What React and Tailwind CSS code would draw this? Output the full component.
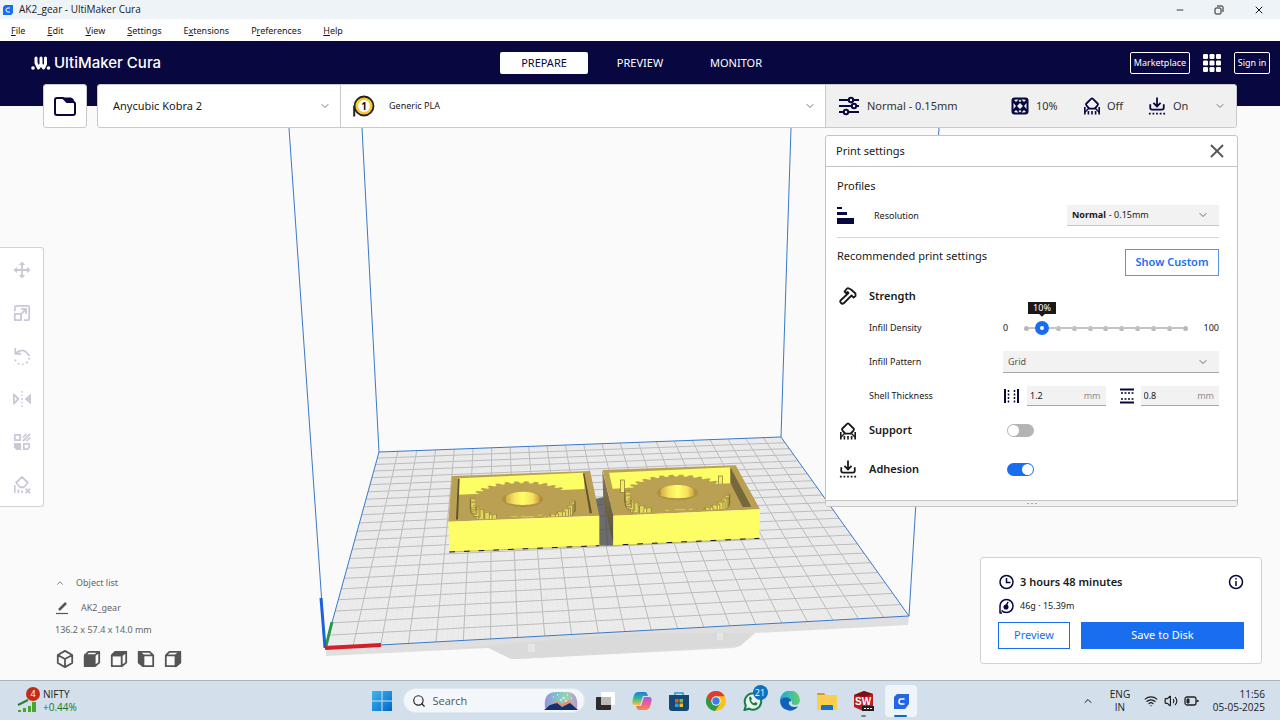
import React, { useState } from 'react';
import { ChevronDown, ChevronUp, X, Minus, Search, Wifi, Volume2 } from 'lucide-react';

const menus = [
    ['', 'F', 'ile'],
    ['', 'E', 'dit'],
    ['', 'V', 'iew'],
    ['', 'S', 'ettings'],
    ['E', 'x', 'tensions'],
    ['P', 'r', 'eferences'],
    ['', 'H', 'elp'],
];

// Build plate corners on screen: front-left, front-right, back-right, back-left
const plate = [[325, 648], [909, 616], [781, 437], [379, 452]];

// Projects (u, v) in 0..1 on the plate to screen coordinates
function project(u, v) {
    const [[x0, y0], [x1, y1], [x2, y2], [x3, y3]] = plate;
    const dx1 = x1 - x2, dx2 = x3 - x2, sx = x0 - x1 + x2 - x3;
    const dy1 = y1 - y2, dy2 = y3 - y2, sy = y0 - y1 + y2 - y3;
    const det = dx1 * dy2 - dx2 * dy1;
    const g = (sx * dy2 - dx2 * sy) / det;
    const h = (dx1 * sy - sx * dy1) / det;
    const w = g * u + h * v + 1;
    return [
        ((x1 - x0 + g * x1) * u + (x3 - x0 + h * x3) * v + x0) / w,
        ((y1 - y0 + g * y1) * u + (y3 - y0 + h * y3) * v + y0) / w,
    ];
}

function gridPath(cells) {
    let d = '';
    for (let i = 1; i < cells; i++) {
        const t = i / cells;
        d += `M${project(t, 0)}L${project(t, 1)}M${project(0, t)}L${project(1, t)}`;
    }
    return d;
}

function Gear({ cx, cy }) {
    const teeth = 32;
    const at = (a, r) => [cx + Math.cos(a) * 157 * r, cy + Math.sin(a) * 56 * r];
    const outline = [];
    const walls = [];
    for (let i = 0; i < teeth; i++) {
        const a = (i / teeth) * Math.PI * 2;
        const s = (Math.PI * 2) / teeth;
        const p = [at(a, 0.9), at(a + s * 0.2, 1), at(a + s * 0.55, 1), at(a + s * 0.75, 0.9)];
        outline.push(...p);
        // only the teeth at both sides show their walls
        if (Math.sin(a) > -0.15 && Math.abs(Math.cos(a)) > 0.55) walls.push([p[0], p[1]], [p[2], p[3]], [p[1], p[2]]);
    }
    return (
        <g>
            {walls.map(([p, q], i) => (
                <polygon
                    key={i}
                    points={`${p} ${q} ${q[0]},${q[1] + 30} ${p[0]},${p[1] + 30}`}
                    fill={i % 3 === 2 ? '#fdfd66' : '#e6d65a'}
                    stroke="#6d6030"
                    strokeWidth="1.500"
                />
            ))}
            <polygon points={outline.join(' ')} fill="#b9a052" />
            <ellipse cx={cx} cy={cy - 2} rx="62" ry="23" fill="#b08f46" />
            <path
                d={`M${cx - 50} ${cy - 12}C${cx - 30} ${cy - 29} ${cx + 30} ${cy - 29} ${cx + 50} ${cy - 12}V${cy + 8}Q${cx} ${cy + 22} ${cx - 50} ${cy + 8}Z`}
                fill="url(#holeShade)"
            />
        </g>
    );
}

function Viewport() {
    return (
        <svg className="absolute inset-0 w-full h-full" viewBox="0 84 1280 596" preserveAspectRatio="xMidYMid slice" aria-hidden="true">
            <defs>
                <linearGradient id="holeShade">
                    <stop offset="0" stopColor="#d4ad49" />
                    <stop offset="0.25" stopColor="#f6e45e" />
                    <stop offset="0.5" stopColor="#ffff68" />
                    <stop offset="0.8" stopColor="#f6e05c" />
                    <stop offset="1" stopColor="#cc9f42" />
                </linearGradient>
                <linearGradient id="wallShade" x2="0" y2="1">
                    <stop offset="0" stopColor="#8a7a4a" />
                    <stop offset="1" stopColor="#55503c" />
                </linearGradient>
                <clipPath id="trayLeft"><polygon points="86,60 462,48 486,194 76,211" /></clipPath>
                <clipPath id="trayRight"><polygon points="537,60 901,40 962,173 572,191" /></clipPath>
            </defs>

            {/* bed underside */}
            <polygon points="326,648 909,616 908,625 755,633 740,646 734,648 518,659 511,659 489,648 326,656" fill="#dfdfdf" />
            <polygon points="455,648 489,648 511,659 518,659 740,646 755,633 640,633" fill="#dadada" />
            <rect x="528" y="644" width="7" height="8" rx="1" fill="#e6e6e6" />
            <rect x="717" y="633" width="6" height="7" rx="1" fill="#e6e6e6" />

            <polygon points={plate.join(' ')} fill="#ededed" />
            <path d={gridPath(110)} stroke="#e6e6e6" strokeWidth="0.5" />
            <path d={gridPath(22)} stroke="#bcbcbc" strokeWidth="1" />

            <g stroke="#3a78c8" strokeWidth="1" fill="none">
                <polygon points={plate.join(' ')} />
                <path d="M325 648L289 128M379 452L362 128M781 437L791 128M909 616L939 128" />
            </g>
            <path d="M326 646L332 622" stroke="#229a48" strokeWidth="3" />
            <path d="M325 648L321 598" stroke="#1d62dc" strokeWidth="3" />
            <path d="M325 648L381 645" stroke="#d2202a" strokeWidth="4" />

            {/* trays with the gears inside */}
            <g transform="translate(430 450) scale(0.33333)">
                <polygon points="495,147 525,140 550,287 508,287" fill="#6c6c6c" />
                <path d="M497 165L548 160M500 200L548 195M503 240L548 235M525 140L532 287" stroke="#595959" strokeWidth="2" />

                <polygon points="66,78 480,63 508,197 55,215" fill="#b9a052" />
                <polygon points="86,85 460,68 464,117 86,134" fill="#fdfd66" />
                <polygon points="84,86 89,86 84,208 78,209" fill="#5d5330" />
                <polygon points="459,70 463,70 486,190 479,190" fill="#5d5330" />
                <g clipPath="url(#trayLeft)"><Gear cx={278} cy={150} /></g>
                <path d="M244 200h20M272 200h40M322 196h16" stroke="#e8dc5c" strokeWidth="2" />
                <polygon points="55,215 508,197 508,287 58,306" fill="#fdfd66" />

                <polygon points="518,60 917,46 990,178 550,197" fill="#b9a052" />
                <polygon points="517,60 550,197 550,287 520,150" fill="url(#wallShade)" />
                <polygon points="537,68 901,52 903,100 548,116" fill="#fdfd66" />
                <polygon points="901,52 964,170 938,171 901,98" fill="#75683c" />
                <g fill="#f4ef62" stroke="#7c6e38" strokeWidth="2">
                    <rect x="571" y="90" width="12" height="38" />
                    <rect x="866" y="78" width="11" height="26" />
                </g>
                <g clipPath="url(#trayRight)"><Gear cx={742} cy={130} /></g>
                <path d="M706 181h12M734 179h32M776 178h12" stroke="#e8dc5c" strokeWidth="2" />
                <polygon points="550,197 990,178 988,265 550,287" fill="#fdfd66" />

                <path d="M58 306L508 287M550 287L988 265" stroke="#a8a13c" strokeWidth="2" />
                <path d="M58 306L508 287M578 284L988 265" stroke="#111133" strokeWidth="3" strokeDasharray="17 27" />
            </g>
        </svg>
    );
}

function SupportIcon({ className }) {
    return (
        <svg viewBox="0 0 20 20" className={className} fill="none" stroke="currentColor" strokeWidth="2" strokeLinejoin="round" aria-hidden="true">
            <path d="M9 2Q10 1 11 2L16.500 7.500Q17 8.500 16 9.500L13 13H7L4 9.500Q3 8.500 3.500 7.500Z" />
            <path d="M7 12L2 17M13 12L18 17" strokeWidth="1.500" />
            <path d="M2 11V19.500M18 11V19.500M6 15.500V19.500M10 15.500V19.500M14 15.500V19.500" strokeWidth="1.800" />
        </svg>
    );
}

function AdhesionIcon({ className }) {
    return (
        <svg viewBox="0 0 20 20" className={className} fill="none" stroke="currentColor" strokeWidth="2" aria-hidden="true">
            <path d="M10 0.500V10M6 6.500l4 4l4-4M2.500 8V12Q2.500 14 4.500 14H15.500Q17.500 14 17.500 12V8" />
            <path d="M1 18.500H19" strokeDasharray="2 2" />
        </svg>
    );
}

function InfillIcon() {
    return (
        <svg viewBox="0 0 18 18" className="w-[18px] h-[18px]" aria-hidden="true">
            <rect x="0.500" y="0.500" width="17" height="17" rx="3" fill="currentColor" />
            <path
                d="M9 6L12 9L9 12L6 9ZM5 2.500H7.500L5 5L3 3ZM13 2.500H10.500L13 5L15 3ZM5 15.500H7.500L5 13L3 15ZM13 15.500H10.500L13 13L15 15ZM2.500 6L5 9L2.500 12ZM15.500 6L13 9L15.500 12ZM9 2.500L10.500 4L9 5L7.500 4ZM9 15.500L10.500 14L9 13L7.500 14Z"
                fill="#f0f0f0"
            />
        </svg>
    );
}

function SlidersIcon() {
    return (
        <svg viewBox="0 0 22 20" className="w-[22px] h-[20px]" fill="none" stroke="currentColor" strokeWidth="2" aria-hidden="true">
            <path d="M1 4H10M16 4H21M1 10H13M19 10H21M1 16H5M11 16H21" />
            <circle cx="13" cy="4" r="2.200" />
            <circle cx="16" cy="10" r="2.200" />
            <circle cx="8" cy="16" r="2.200" />
        </svg>
    );
}

function FolderIcon() {
    return (
        <svg viewBox="0 0 22 19" className="w-[22px] h-[19px]" fill="none" stroke="currentColor" strokeWidth="2" strokeLinejoin="round" aria-hidden="true">
            <path d="M1 3Q1 1 3 1H9L13 5H19Q21 5 21 7V16Q21 18 19 18H3Q1 18 1 16Z" />
            <path d="M9 1H17Q19 1 20 5H13Z" fill="currentColor" strokeWidth="1" />
        </svg>
    );
}

function SpoolIcon() {
    return (
        <svg viewBox="0 0 22 22" className="w-[22px] h-[22px]" aria-hidden="true">
            <path d="M1.200 11V21.500" stroke="#222" strokeWidth="2" />
            <circle cx="11" cy="11" r="9.500" fill="#fbc82f" stroke="#222" strokeWidth="1.800" />
            <circle cx="11" cy="11" r="6" fill="#fff" />
            <text x="11" y="14.500" textAnchor="middle" fontSize="10" fontWeight="700" fontFamily="Noto Sans, sans-serif" fill="#111">1</text>
        </svg>
    );
}

function HammerIcon() {
    return (
        <svg viewBox="0 0 18 18" className="w-[18px] h-[18px]" fill="none" stroke="currentColor" strokeWidth="1.800" strokeLinejoin="round" aria-hidden="true">
            <path d="M5.500 4.500L8 1.500Q9 1 10 1.500L12 2.500L16.500 6.500V9L14.500 10.500L12.500 8.500L5 16Q3.500 17.500 2 16T2 13L9.500 6L8.500 5L7 6Z" />
        </svg>
    );
}

const cubeFaces = [
    null,
    'M2 6H12V18H2Z',
    'M2 6L6 2H18L13 6Z',
    'M2 2L7 6V18L2 14Z',
    'M13 6L18 2V14L13 18Z',
];

function CubeIcon({ face }) {
    let lines = 'M2 6H13V18H2ZM2 6L6 2H18V14L13 18M13 6L18 2';
    if (face === 0) lines = 'M10 1L18 5.500V14.500L10 19L2 14.500V5.500ZM2 5.500L10 10L18 5.500M10 10V19';
    if (face === 3) lines = 'M7 6H18V18H7ZM7 6L2 2V14L7 18M2 2H14L18 6';
    return (
        <svg viewBox="0 0 20 20" className="w-[18px] h-[18px]" fill="none" stroke="currentColor" strokeWidth="2" strokeLinejoin="round" aria-hidden="true">
            <path d={lines} />
            {face > 0 && <path d={cubeFaces[face]} fill="currentColor" />}
        </svg>
    );
}

const tools = [
    ['Move', <g key="i"><path d="M10 3V17M3 10H17" /><path d="M10 0.500L13.500 4.500H6.500ZM10 19.500L13.500 15.500H6.500ZM0.500 10L4.500 6.500V13.500ZM19.500 10L15.500 6.500V13.500Z" fill="currentColor" stroke="none" /></g>],
    ['Scale', <path key="i" d="M2 8V4Q2 2 4 2H16Q18 2 18 4V16Q18 18 16 18H12M2 11H9V18H2ZM8 12L14 6M9 5.500H14.500V11" />],
    ['Rotate', <g key="i"><path d="M3 7Q10 1 15 6Q18 9 18 10M2.500 1V7.500H9" /><path d="M18 12A8 8 0 0 1 2 11" strokeDasharray="2 3" /></g>],
    ['Mirror', <g key="i"><path d="M1 5V15L6 10Z" /><path d="M20 4V16L13 10Z" fill="currentColor" stroke="none" /><path d="M10 1V19" strokeDasharray="2 2" strokeWidth="1.500" /></g>],
    ['Per model settings', <g key="i"><path d="M2 2H8V8H2ZM12 12H18V16L16 18H12Z" /><path d="M1 11H9V19H4L1 16Z" fill="currentColor" stroke="none" /><path d="M11 5L15 1M11 9L19 1M15 9L19 5" strokeWidth="1.800" /></g>],
    ['Support blocker', <g key="i"><path d="M10 1L16.500 7.500L12 12.500H8L3.500 7.500Z" /><path d="M2 10V19M6 15V19M10 16V19M14 14L19 19M19 14L14 19" strokeWidth="1.800" /></g>],
];

function NumberField({ label, value }) {
    return (
        <div className="flex flex-1 min-w-0 h-[20px] items-center bg-[#f2f2f2] border-b border-[#a8a8a8] pl-[3px] pr-[5px]">
            <input aria-label={label} defaultValue={value} className="w-0 flex-1 bg-transparent outline-none" />
            <span className="text-[#8f8f8f]">mm</span>
        </div>
    );
}

function Toggle({ id, defaultChecked }) {
    return (
        <input
            id={id}
            type="checkbox"
            role="switch"
            defaultChecked={defaultChecked}
            className="ml-1 appearance-none flex items-center w-[27px] h-[13px] rounded-full bg-[#b4b4b4] checked:bg-[#196ef0] before:block before:w-[11px] before:h-[11px] before:rounded-full before:bg-white before:ml-px checked:before:ml-[15px]"
        />
    );
}

function PrintSettings() {
    const [density, setDensity] = useState(10);

    return (
        <section className="mt-[7px] mr-6 bg-white border border-[#c4c4c4] rounded-[3px] text-[#191919] text-[9px]">
            <div className="flex h-[31px] items-center justify-between pl-[10px] pr-[9px] border-b border-[#c4c4c4]">
                <h2 className="text-[11px]">Print settings</h2>
                <button aria-label="Close"><X className="w-[22px] h-[22px] text-[#555]" strokeWidth={2} /></button>
            </div>

            <div className="pl-[11px] pr-[18px] pb-[10px]">
                <h3 className="flex h-[38px] items-center text-[11px]">Profiles</h3>
                <div className="flex h-[21px] items-center">
                    <svg viewBox="0 0 17 17" className="w-[17px] h-[17px] mr-[20px]" fill="#08073f" aria-hidden="true">
                        <path d="M0 0H5V2H0ZM0 5H10V8H0ZM0 11H17V17H0Z" />
                    </svg>
                    <label htmlFor="resolution">Resolution</label>
                    <div className="relative ml-auto flex w-[152px] h-[21px] items-center bg-[#f2f2f2] border-b border-[#c9c9c9] pl-[5px]">
                        <span className="font-bold">Normal</span>
                        <select id="resolution" className="flex-1 h-full appearance-none bg-transparent pl-[3px] outline-none">
                            <option>- 0.15mm</option>
                        </select>
                        <ChevronDown className="absolute right-[10px] w-3 h-3 text-[#666] pointer-events-none" />
                    </div>
                </div>
                <hr className="mt-[11px] border-[#d6d6d6]" />

                <div className="mt-[11px] flex items-start justify-between">
                    <h3 className="text-[11px] leading-[14px]">Recommended print settings</h3>
                    <button className="w-[94px] h-[27px] border border-[#5a94e6] text-[#196ef0] text-[11px] font-semibold">Show Custom</button>
                </div>

                <div className="mt-[10px] flex h-5 items-center">
                    <span className="w-8 pl-[2px]"><HammerIcon /></span>
                    <h4 className="text-[11px] font-semibold">Strength</h4>
                </div>

                <div className="mt-[5px] pl-8 flex h-[34px] items-center">
                    <label htmlFor="density" className="w-[134px] shrink-0">Infill Density</label>
                    <span>0</span>
                    <div className="relative ml-auto w-[174px] h-[14px]">
                        <div className="absolute inset-x-[5px] inset-y-0 flex items-center justify-between">
                            <div className="absolute inset-x-1 h-[2px] bg-[#c4c4c4]" />
                            {Array.from({ length: 11 }, (_, i) => (
                                <i key={i} className="w-[5px] h-[5px] rounded-full bg-[#b8b8b8]" />
                            ))}
                        </div>
                        <input
                            id="density"
                            type="range"
                            min="0"
                            max="100"
                            step="10"
                            value={density}
                            onChange={(e) => setDensity(Number(e.target.value))}
                            className="absolute inset-0 w-full h-[14px] appearance-none bg-transparent [&::-webkit-slider-thumb]:appearance-none [&::-webkit-slider-thumb]:w-[14px] [&::-webkit-slider-thumb]:h-[14px] [&::-webkit-slider-thumb]:rounded-full [&::-webkit-slider-thumb]:border-[5px] [&::-webkit-slider-thumb]:border-[#196ef0] [&::-webkit-slider-thumb]:bg-white"
                        />
                        <output
                            htmlFor="density"
                            className="absolute bottom-[21px] -translate-x-1/2 flex w-7 h-3 items-center justify-center bg-[#191919] text-white after:absolute after:-bottom-[2px] after:w-1 after:h-1 after:rotate-45 after:bg-[#191919]"
                            style={{ left: 7 + density * 1.6 }}
                        >
                            {density}%
                        </output>
                    </div>
                    <span className="w-[26px] text-right">100</span>
                </div>

                <div className="pl-8 flex h-[34px] items-center">
                    <label htmlFor="pattern" className="w-[134px] shrink-0">Infill Pattern</label>
                    <div className="relative flex-1 flex items-center">
                        <select id="pattern" className="w-full h-[22px] appearance-none bg-[#f2f2f2] border-b border-[#a8a8a8] px-[5px] text-[#555] outline-none">
                            <option>Grid</option>
                        </select>
                        <ChevronDown className="absolute right-[10px] w-3 h-3 text-[#666] pointer-events-none" />
                    </div>
                </div>

                <div className="pl-8 flex h-[34px] items-center">
                    <span className="w-[134px] shrink-0">Shell Thickness</span>
                    <div className="flex flex-1 min-w-0 items-center">
                        <svg viewBox="0 0 17 14" className="w-[17px] h-[14px] mr-[7px]" stroke="#08073f" strokeWidth="2" aria-hidden="true">
                            <path d="M2 0V14M15 0V14" />
                            <path d="M5.500 1V14M11.500 1V14" strokeDasharray="2 1.500" strokeWidth="1.500" />
                        </svg>
                        <NumberField label="Wall thickness" value="1.2" />
                        <svg viewBox="0 0 14 16" className="w-[14px] h-4 ml-[14px] mr-[7px]" stroke="#08073f" strokeWidth="2" aria-hidden="true">
                            <path d="M0 1.500H14M0 14.500H14" />
                            <path d="M1 5H14M1 11H14" strokeDasharray="2 1.500" strokeWidth="1.500" />
                        </svg>
                        <NumberField label="Top/bottom thickness" value="0.8" />
                    </div>
                </div>

                <div className="flex h-[35px] items-center">
                    <span className="w-8 pl-[2px]"><SupportIcon className="w-[18px] h-[18px]" /></span>
                    <label htmlFor="support" className="w-[134px] text-[11px] font-semibold">Support</label>
                    <Toggle id="support" />
                </div>
                <div className="flex h-[42px] items-center">
                    <span className="w-8 pl-[2px]"><AdhesionIcon className="w-[18px] h-[18px]" /></span>
                    <label htmlFor="adhesion" className="w-[134px] text-[11px] font-semibold">Adhesion</label>
                    <Toggle id="adhesion" defaultChecked />
                </div>
            </div>

            <div className="flex h-[6px] items-center justify-center gap-[2px] bg-[#f0f0f0] border-t border-[#c4c4c4]">
                <i className="w-[2px] h-px bg-[#aaa]" />
                <i className="w-[2px] h-px bg-[#aaa]" />
                <i className="w-[2px] h-px bg-[#aaa]" />
            </div>
        </section>
    );
}

function ActionPanel() {
    return (
        <section className="mt-auto mb-4 self-end w-[282px] bg-white border border-[#d2d2d2] rounded-[3px] pt-[14px] px-[17px] pb-[14px] text-[#191919]">
            <div className="flex h-5 items-center">
                <svg viewBox="0 0 16 16" className="w-4 h-4 mr-[6px]" fill="none" stroke="#08073f" strokeWidth="1.500" aria-hidden="true">
                    <circle cx="8.500" cy="8" r="6.500" />
                    <path d="M8.500 4V8.500H12.500" />
                </svg>
                <span className="text-[11px] font-semibold">3 hours 48 minutes</span>
                <button aria-label="Print information" className="ml-auto">
                    <svg viewBox="0 0 16 16" className="w-4 h-4" fill="none" stroke="#08073f" strokeWidth="1.500" aria-hidden="true">
                        <circle cx="8" cy="8" r="6.500" />
                        <path d="M8 7V12M8 4V5.500" />
                    </svg>
                </button>
            </div>
            <div className="mt-1 flex h-5 items-center">
                <svg viewBox="0 0 16 16" className="w-4 h-4 mr-[6px]" fill="none" stroke="#08073f" strokeWidth="1.500" aria-hidden="true">
                    <path d="M2 15V8A6.500 6.500 0 1 1 8.500 14.500Q5.500 14.500 3.500 12.500M1.500 15H4" />
                    <circle cx="8" cy="9" r="1.800" fill="#08073f" />
                    <path d="M8 8L10 4" />
                </svg>
                <span className="text-[9px]">46g · 15.39m</span>
            </div>
            <div className="mt-[6px] flex gap-[11px]">
                <button className="w-[72px] h-[27px] border border-[#196ef0] text-[#196ef0] text-[11px]">Preview</button>
                <button className="flex-1 h-[27px] bg-[#196ef0] text-white text-[11px]">Save to Disk</button>
            </div>
        </section>
    );
}

function TaskIcon({ label, active, children }) {
    return (
        <button aria-label={label} className={active ? 'relative w-8 h-8 flex items-center justify-center rounded bg-[#eff4fa]' : 'relative w-8 h-8 flex items-center justify-center'}>
            <svg viewBox="0 0 20 20" className="w-5 h-5" aria-hidden="true">{children}</svg>
            {active && <i className="absolute bottom-0 w-[13px] h-[2px] rounded-full bg-[#0f6cbd]" />}
        </button>
    );
}

function Taskbar() {
    return (
        <footer className="relative z-10 flex h-10 items-center bg-[#d3dfeb] border-t border-[#a9b3be] text-[#1b1b1b] font-['Open_Sans',sans-serif] text-[10px] leading-[13px]">
            <div className="flex-1 flex items-center">
                <div className="relative ml-[17px] w-[26px] h-[28px]">
                    <svg viewBox="0 0 20 16" className="absolute bottom-[2px] w-5 h-4" fill="#4aa52e" aria-hidden="true">
                        <path d="M1 13H4V15H1ZM6 11H9V15H6ZM11 9H14V15H11ZM15 5H19V15H15Z" />
                        <path d="M1 8L11 3" stroke="#23862a" strokeWidth="2" />
                    </svg>
                    <span className="absolute top-0 left-[9px] w-[14px] h-[14px] rounded-full bg-[#c42b1c] text-white text-center text-[9px]">4</span>
                </div>
                <div>
                    <div>NIFTY</div>
                    <div className="text-[#127a1c]">+0.44%</div>
                </div>
            </div>

            <div className="flex items-center pl-[5px]">
                <button aria-label="Start" className="ml-[3px]">
                    <svg viewBox="0 0 20 20" className="w-5 h-5" aria-hidden="true">
                        <defs><linearGradient id="win" x2="1" y2="1"><stop stopColor="#3cb9f2" /><stop offset="1" stopColor="#0067c5" /></linearGradient></defs>
                        <path d="M0 0H9.500V9.500H0ZM10.500 0H20V9.500H10.500ZM0 10.500H9.500V20H0ZM10.500 10.500H20V20H10.500Z" fill="url(#win)" />
                    </svg>
                </button>
                <label className="ml-[11px] mr-1 flex w-[182px] h-[25px] items-center rounded-full bg-[#f3f7fb] border border-[#dfe7ef] pl-2 pr-[5px] overflow-hidden">
                    <Search className="w-[14px] h-[14px] mr-[7px] text-[#222]" />
                    <input type="search" placeholder="Search" aria-label="Search" className="flex-1 min-w-0 bg-transparent text-[11px] placeholder:text-[#555] outline-none" />
                    <svg viewBox="0 0 36 21" className="w-9 h-[21px]" aria-hidden="true">
                        <defs>
                            <linearGradient id="sky"><stop stopColor="#8676d8" /><stop offset="0.4" stopColor="#63b9bd" /><stop offset="0.7" stopColor="#8bc99c" /><stop offset="1" stopColor="#a779d4" /></linearGradient>
                        </defs>
                        <path d="M2 18Q0 2 13 2H25Q36 3 34 19Z" fill="url(#sky)" opacity="0.8" />
                        <path d="M6 16L14 11L19 14L26 10L31 16Z" fill="#ee8d68" />
                        <path d="M1 20L7 15L14 13L19 17L27 13L35 20Z" fill="#14306e" />
                        <path d="M10 7h1M14 5h1M19 8h3M24 5h1M28 8h1M17 10h2M22 11h2" stroke="#fff" />
                    </svg>
                </label>
                <div className="flex gap-[5px]">
                    <TaskIcon label="Task view">
                        <rect x="6" y="1" width="14" height="13" rx="1" fill="#fff" />
                        <rect x="1" y="6" width="15" height="13" rx="1" fill="#2c2c2c" />
                        <rect x="6" y="6" width="10" height="8" fill="#bcbcbc" />
                    </TaskIcon>
                    <TaskIcon label="Copilot">
                        <defs>
                            <linearGradient id="cpA" x2="0" y2="1"><stop stopColor="#1d7ad8" /><stop offset="0.5" stopColor="#35b99a" /><stop offset="1" stopColor="#f1c730" /></linearGradient>
                            <linearGradient id="cpB" x2="0" y2="1"><stop stopColor="#a35ce8" /><stop offset="0.5" stopColor="#ee5d9d" /><stop offset="1" stopColor="#f68c3d" /></linearGradient>
                        </defs>
                        <path d="M6 1H13Q15 1 16 5H11L8 14H3Q-1 14 1 8Q2 1 6 1Z" fill="url(#cpA)" />
                        <path d="M14 19H7Q5 19 4 15H9L12 6H17Q21 6 19 12Q18 19 14 19Z" fill="url(#cpB)" />
                    </TaskIcon>
                    <TaskIcon label="Store">
                        <path d="M6 5V2H14V5" stroke="#2496cf" strokeWidth="1.500" fill="none" />
                        <path d="M0 4H20V17Q20 20 17 20H3Q0 20 0 17Z" fill="#154776" />
                        <path d="M6 8H9.500V11.500H6Z" fill="#ee5429" />
                        <path d="M10.500 8H14V11.500H10.500Z" fill="#80b92e" />
                        <path d="M6 12.500H9.500V16H6Z" fill="#25a3dc" />
                        <path d="M10.500 12.500H14V16H10.500Z" fill="#f9bd1b" />
                    </TaskIcon>
                    <TaskIcon label="Chrome">
                        <circle cx="10" cy="10" r="10" fill="#fbc116" />
                        <path d="M10 10L1.300 5A10 10 0 0 0 9 20L14.300 12.500Z" fill="#2c9b47" />
                        <path d="M10 10L5.700 12.500L1.300 5A10 10 0 0 1 18.700 5.200H10Z" fill="#df3b30" />
                        <circle cx="10" cy="10" r="4.700" fill="#fff" />
                        <circle cx="10" cy="10" r="3.700" fill="#3a7ce8" />
                    </TaskIcon>
                    <div className="relative">
                        <TaskIcon label="WhatsApp">
                            <path d="M1.500 19L2.800 14.500A8.200 8.200 0 1 1 6 17.700Z" fill="#e9f5ee" stroke="#1d7d4a" strokeWidth="2" />
                            <path d="M6 6.500Q7 5 8 6L9 8L8 9.500Q9 11.500 11 12.200L12.500 11L14.500 12.200Q14.500 14.500 12 14.500Q6.500 13.500 6 6.500Z" fill="#1d7d4a" />
                        </TaskIcon>
                        <span className="absolute left-4 top-0 w-[15px] h-[15px] rounded-full bg-[#0f6fc0] text-white text-center text-[9px] leading-[15px]">21</span>
                    </div>
                    <TaskIcon label="Edge">
                        <defs><linearGradient id="edge" x2="1"><stop stopColor="#27a5df" /><stop offset="1" stopColor="#5dd26c" /></linearGradient></defs>
                        <path d="M0 10A10 10 0 0 1 20 9Q20 14 15 14Q11 14 12 11Q12 7 7 7Q1 7 0 10Z" fill="url(#edge)" />
                        <path d="M0 10Q1 6 7 6.500Q11 7 11.500 10Q8 10 9 13Q11 17 18 15.500A10 10 0 0 1 0 10Z" fill="#0f62b5" />
                    </TaskIcon>
                    <TaskIcon label="File Explorer">
                        <path d="M0 3Q0 2 1 2H7L9 5H0Z" fill="#d49a1b" />
                        <path d="M0 4H20V18Q20 19 19 19H1Q0 19 0 18Z" fill="#fbce4d" />
                        <path d="M4 19V15Q4 14 5 14H15Q16 14 16 15V19Z" fill="#1572c4" />
                    </TaskIcon>
                    <div className="relative flex justify-center">
                        <TaskIcon label="SolidWorks">
                            <path d="M0 4L10 0L19 3V16L9 20L0 16Z" fill="#b81d22" />
                            <path d="M0 4L10 0L19 3L10 6Z" fill="#7d1015" />
                            <text x="1" y="14" fontSize="10" fontWeight="700" fontFamily="Liberation Sans, sans-serif" fill="#fff">SW</text>
                            <rect x="8" y="15" width="12" height="5" fill="#251d1d" />
                            <path d="M10 17.500H18" stroke="#fff" strokeDasharray="2 1" />
                        </TaskIcon>
                        <i className="absolute bottom-0 w-[5px] h-[2px] rounded-full bg-[#7b8087]" />
                    </div>
                    <TaskIcon label="UltiMaker Cura" active>
                        <path d="M6 3H18V13L14 18H3V6Z" fill="#2467e4" />
                        <path d="M13.500 8H10Q8 8 8 10.500T10 13H13.500" stroke="#fff" strokeWidth="1.500" fill="none" />
                    </TaskIcon>
                </div>
            </div>

            <div className="flex-1 flex items-center justify-end">
                <ChevronUp className="w-3 h-3 mr-[6px]" />
                <span className="w-[40px] text-center">ENG<br />IN</span>
                <Wifi className="w-[14px] h-[14px] ml-1 mr-[6px]" />
                <Volume2 className="w-[14px] h-[14px] mr-[6px]" />
                <svg viewBox="0 0 15 10" className="w-[15px] h-[10px]" fill="none" stroke="#222" aria-hidden="true">
                    <rect x="1" y="1" width="11" height="8" rx="2" strokeWidth="1.300" />
                    <path d="M3 3H5V7H3Z" fill="#222" />
                    <path d="M13.500 4V6" strokeWidth="2" />
                </svg>
                <span className="w-[66px] mr-[15px] text-right">11:56<br />05-05-2025</span>
            </div>
        </footer>
    );
}

export default function App() {
    return (
        <div className="min-h-screen flex flex-col bg-[#fafafa] font-['Noto_Sans',sans-serif] text-[#191919]">
            <div className="flex h-[19px] items-center bg-[#eef3f8] pl-[3px] pr-[15px] font-['Open_Sans',sans-serif] text-[10px]">
                <svg viewBox="0 0 10 10" className="w-[10px] h-[10px] mr-[6px]" aria-hidden="true">
                    <path d="M2 0H10V8L8 10H0V2Z" fill="#196ef0" />
                    <path d="M7 3H5Q3 3 3 5T5 7H7" stroke="#fff" fill="none" />
                </svg>
                <span>AK2_gear - UltiMaker Cura</span>
                <div className="ml-auto flex items-center gap-[29px]">
                    <button aria-label="Minimize"><Minus className="w-[10px] h-[10px]" /></button>
                    <button aria-label="Restore">
                        <svg viewBox="0 0 10 10" className="w-[10px] h-[10px]" fill="none" stroke="#222" aria-hidden="true">
                            <rect x="1" y="3" width="6" height="6" rx="1" />
                            <path d="M3 1H8Q9 1 9 2V7" />
                        </svg>
                    </button>
                    <button aria-label="Close window"><X className="w-3 h-3" /></button>
                </div>
            </div>

            <nav className="flex h-[22px] items-center gap-[22px] bg-white pl-[11px] text-[9px] leading-[15px]">
                {menus.map(([pre, key, post]) => (
                    <button key={key + post}>{pre}<u>{key}</u>{post}</button>
                ))}
            </nav>

            <header className="h-[65px] bg-[#08073f] text-white">
                <div className="flex h-[44px] items-center">
                    <div className="flex-1 flex items-center">
                        <svg viewBox="0 0 20 14" className="w-5 h-[14px] ml-[31px] mr-[3px]" fill="none" stroke="#fff" strokeWidth="3" strokeLinecap="round" strokeLinejoin="round" aria-hidden="true">
                            <path d="M5 2V7L7.500 12L10 8V2M10 8L12.500 12L14.500 8V2" />
                            <circle cx="2" cy="12" r="1.800" fill="#fff" stroke="none" />
                            <circle cx="17.500" cy="12" r="1.800" fill="#fff" stroke="none" />
                        </svg>
                        <span className="font-['Inter',sans-serif] text-[15px] font-medium">UltiMaker Cura</span>
                    </div>
                    <div className="flex gap-2 text-[11px]">
                        <button className="w-[88px] h-[22px] rounded-[2px] bg-white text-[#08073f]">PREPARE</button>
                        <button className="w-[88px] h-[22px]">PREVIEW</button>
                        <button className="w-[88px] h-[22px]">MONITOR</button>
                    </div>
                    <div className="flex-1 flex items-center justify-end text-[9px]">
                        <button className="w-[60px] h-[22px] border border-white rounded-[2px]">Marketplace</button>
                        <button aria-label="Applications" className="mx-[13px]">
                            <svg viewBox="0 0 18 18" className="w-[18px] h-[18px]" fill="#fff" aria-hidden="true">
                                {[0, 6.5, 13].map((y) => [0, 6.5, 13].map((x) => (
                                    <rect key={`${x}-${y}`} x={x} y={y} width="5" height="5" rx="1.200" />
                                )))}
                            </svg>
                        </button>
                        <button className="w-9 h-[22px] mr-[10px] border border-white rounded-[2px]">Sign in</button>
                    </div>
                </div>
            </header>

            <main className="relative z-10 -mt-[22px] flex-1 flex flex-col">
                <Viewport />

                <div className="relative flex h-[44px] mx-[43px] gap-[10px]">
                    <button aria-label="Open file" className="w-[44px] flex items-center justify-center bg-white border border-[#c9c9c9] rounded-[3px] text-[#08073f]"><FolderIcon /></button>
                    <div className="flex-1 flex bg-white border border-[#c9c9c9] rounded-[3px] overflow-hidden">
                        <button className="w-[243px] flex items-center justify-between pl-[15px] pr-[9px] border-r border-[#c9c9c9] text-[11px]">
                            Anycubic Kobra 2
                            <ChevronDown className="w-3 h-3 text-[#777]" />
                        </button>
                        <button className="flex-1 flex items-center pl-[12px] pr-[9px] text-[9px]">
                            <SpoolIcon />
                            <span className="ml-[14px]">Generic PLA</span>
                            <ChevronDown className="ml-auto w-3 h-3 text-[#777]" />
                        </button>
                        <button className="w-[411px] flex items-center bg-[#f0f0f0] border-l border-[#c9c9c9] pl-3 pr-[10px] text-[11px] text-[#08073f]">
                            <SlidersIcon />
                            <span className="ml-[7px] flex-1 text-left text-[#333]">Normal - 0.15mm</span>
                            <span className="flex w-[72px] items-center gap-[7px]"><InfillIcon /><span className="text-[#333]">10%</span></span>
                            <span className="flex w-[65px] items-center gap-[6px]"><SupportIcon className="w-[18px] h-[18px]" /><span className="text-[#333]">Off</span></span>
                            <span className="flex w-[66px] items-center gap-[7px]"><AdhesionIcon className="w-[18px] h-[18px]" /><span className="text-[#333]">On</span></span>
                            <ChevronDown className="w-3 h-3 text-[#777]" />
                        </button>
                    </div>
                </div>

                <div className="relative flex-1 flex justify-between">
                    <div className="flex flex-col">
                        <div className="mt-[119px] flex flex-col w-[44px] bg-white border border-l-0 border-[#d2d2d2] rounded-r-[3px] text-[#c9c9d8]">
                            {tools.map(([name, icon]) => (
                                <button key={name} aria-label={name} className="h-[43px] flex items-center justify-center">
                                    <svg viewBox="0 0 20 20" className="w-[18px] h-[18px]" fill="none" stroke="currentColor" strokeWidth="2" strokeLinejoin="round" aria-hidden="true">{icon}</svg>
                                </button>
                            ))}
                        </div>

                        <div className="mt-auto pl-[55px] pb-3 text-[9px] leading-[18px] text-[#666]">
                            <button className="flex items-center"><ChevronUp className="w-[10px] h-[10px] mr-[11px]" />Object list</button>
                            <div className="mt-[7px] flex items-center">
                                <svg viewBox="0 0 14 14" className="w-[14px] h-[14px] mr-[12px]" stroke="#555" fill="none" aria-hidden="true">
                                    <path d="M4 9L11 2" strokeWidth="2.500" />
                                    <path d="M1 12.500H13" strokeWidth="1.200" />
                                </svg>
                                AK2_gear
                            </div>
                            <div className="mt-1">136.2 x 57.4 x 14.0 mm</div>
                            <div className="mt-[11px] flex gap-[9px] pl-px text-[#555]">
                                {['3D view', 'Front view', 'Top view', 'Left view', 'Right view'].map((name, i) => (
                                    <button key={name} aria-label={name}><CubeIcon face={i} /></button>
                                ))}
                            </div>
                        </div>
                    </div>

                    <div className="w-[455px] pr-[18px] flex flex-col">
                        <PrintSettings />
                        <ActionPanel />
                    </div>
                </div>
            </main>

            <Taskbar />
        </div>
    );
}
